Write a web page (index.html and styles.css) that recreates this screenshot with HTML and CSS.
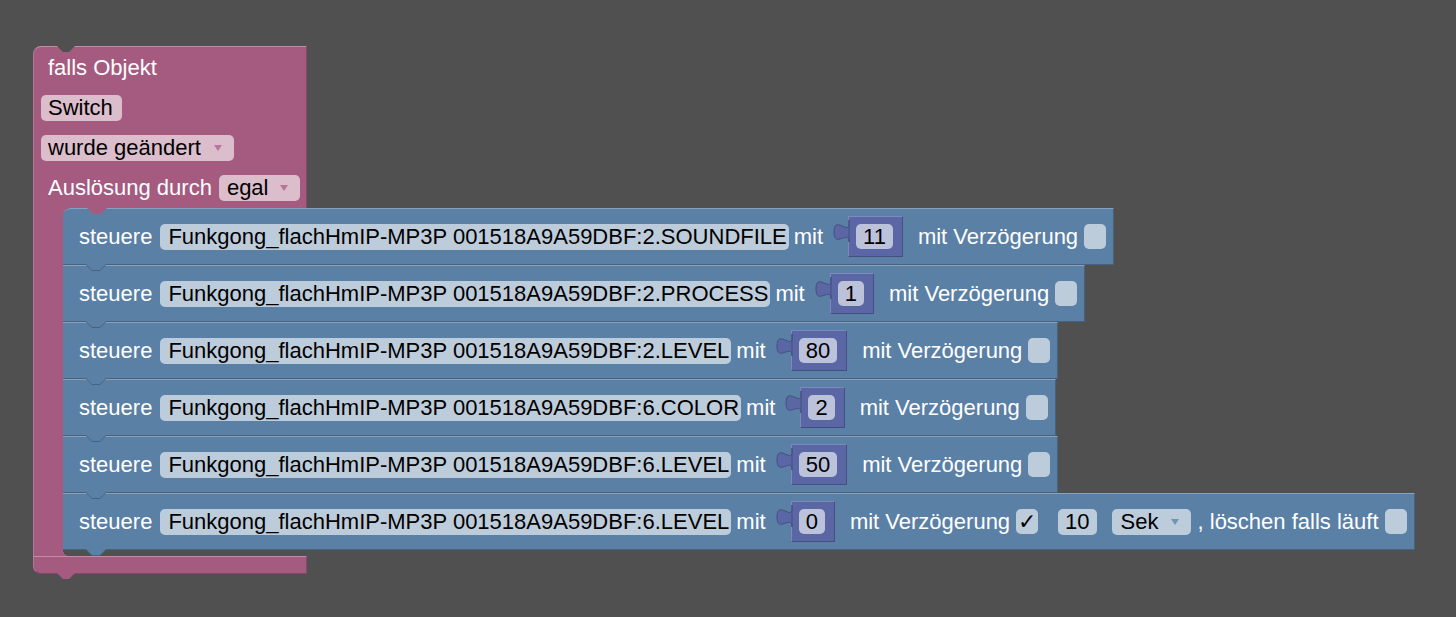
FILE: index.html
```html
<!DOCTYPE html>
<html lang="de">
<head>
<meta charset="utf-8">
<title>Blockly</title>
<link rel="stylesheet" href="styles.css">
</head>
<body>
<div class="workspace">
  <div class="event">
    <div class="ev-head">
      <div class="ev-row"><span class="lbl lbl-first">falls Objekt</span></div>
      <div class="ev-row"><span class="pfield pf-switch">Switch</span></div>
      <div class="ev-row"><span class="pfield dd">wurde geändert<i class="arrow"></i></span></div>
      <div class="ev-row"><span class="lbl lbl-first">Auslösung durch</span><span class="pfield dd pf-egal">egal<i class="arrow"></i></span></div>
    </div>
    <div class="ev-body">
      <div class="arm"></div>
      <div class="stack">
        <div class="stmt first">
          <span class="lbl">steuere</span>
          <span class="field">Funkgong_flachHmIP-MP3P 001518A9A59DBF:2.SOUNDFILE</span>
          <span class="lbl mit">mit</span>
          <span class="val"><svg class="tab" width="16" height="26" viewBox="0 0 16 26"><path d="M15 1 V5 C15 16 0 -4 0 13 S15 10 15 23 Z" /></svg><span class="vfield">11</span></span>
          <span class="lbl mv">mit Verzögerung</span>
          <span class="cb"></span>
        </div>
        <div class="stmt">
          <span class="lbl">steuere</span>
          <span class="field">Funkgong_flachHmIP-MP3P 001518A9A59DBF:2.PROCESS</span>
          <span class="lbl mit">mit</span>
          <span class="val"><svg class="tab" width="16" height="26" viewBox="0 0 16 26"><path d="M15 1 V5 C15 16 0 -4 0 13 S15 10 15 23 Z" /></svg><span class="vfield">1</span></span>
          <span class="lbl mv">mit Verzögerung</span>
          <span class="cb"></span>
        </div>
        <div class="stmt">
          <span class="lbl">steuere</span>
          <span class="field">Funkgong_flachHmIP-MP3P 001518A9A59DBF:2.LEVEL</span>
          <span class="lbl mit">mit</span>
          <span class="val"><svg class="tab" width="16" height="26" viewBox="0 0 16 26"><path d="M15 1 V5 C15 16 0 -4 0 13 S15 10 15 23 Z" /></svg><span class="vfield">80</span></span>
          <span class="lbl mv">mit Verzögerung</span>
          <span class="cb"></span>
        </div>
        <div class="stmt">
          <span class="lbl">steuere</span>
          <span class="field">Funkgong_flachHmIP-MP3P 001518A9A59DBF:6.COLOR</span>
          <span class="lbl mit">mit</span>
          <span class="val"><svg class="tab" width="16" height="26" viewBox="0 0 16 26"><path d="M15 1 V5 C15 16 0 -4 0 13 S15 10 15 23 Z" /></svg><span class="vfield">2</span></span>
          <span class="lbl mv">mit Verzögerung</span>
          <span class="cb"></span>
        </div>
        <div class="stmt">
          <span class="lbl">steuere</span>
          <span class="field">Funkgong_flachHmIP-MP3P 001518A9A59DBF:6.LEVEL</span>
          <span class="lbl mit">mit</span>
          <span class="val"><svg class="tab" width="16" height="26" viewBox="0 0 16 26"><path d="M15 1 V5 C15 16 0 -4 0 13 S15 10 15 23 Z" /></svg><span class="vfield">50</span></span>
          <span class="lbl mv">mit Verzögerung</span>
          <span class="cb"></span>
        </div>
        <div class="stmt">
          <span class="lbl">steuere</span>
          <span class="field">Funkgong_flachHmIP-MP3P 001518A9A59DBF:6.LEVEL</span>
          <span class="lbl mit">mit</span>
          <span class="val"><svg class="tab" width="16" height="26" viewBox="0 0 16 26"><path d="M15 1 V5 C15 16 0 -4 0 13 S15 10 15 23 Z" /></svg><span class="vfield">0</span></span>
          <span class="lbl mv">mit Verzögerung</span>
          <span class="cb checked">✓</span>
          <span class="field num">10</span>
          <span class="field dd sek">Sek<i class="arrow"></i></span>
          <span class="lbl comma">, löschen falls läuft</span>
          <span class="cb"></span>
        </div>
      </div>
    </div>
    <div class="ev-foot"></div>
  </div>
</div>
</body>
</html>
```

FILE: styles.css
```css
html, body {
  margin: 0;
  padding: 0;
  background: #505050;
}

body {
  font-family: "Liberation Sans", Arial, "DejaVu Sans", sans-serif;
  font-size: 22px;
}

.workspace {
  position: relative;
  width: 1456px;
  height: 617px;
  overflow: hidden;
  background: #505050;
}

/* ---------- pink event block ---------- */
.event {
  position: absolute;
  left: 33px;
  top: 46px;
  display: flex;
  flex-direction: column;
  align-items: flex-start;
}

.ev-head {
  position: relative;
  box-sizing: border-box;
  width: 274px;
  padding: 1px 7px 0 7px;
  background: #a55b80;
  border-top: 1px solid #c08ca6;
  border-left: 1px solid #b57596;
  border-right: 1px solid #84496a;
  border-top-left-radius: 8px;
}

/* top notch */
.ev-head::before {
  content: "";
  position: absolute;
  top: -1px;
  left: 23px;
  width: 18px;
  height: 6px;
  background: #505050;
  clip-path: polygon(0 0, 100% 0, 67% 100%, 33% 100%);
}

/* tab into the first statement */
.ev-head::after {
  content: "";
  position: absolute;
  bottom: -6px;
  left: 52px;
  width: 22px;
  height: 7px;
  background: #a55b80;
  clip-path: polygon(0 0, 100% 0, 68% 100%, 32% 100%);
  z-index: 2;
}

.ev-row {
  display: flex;
  align-items: center;
  height: 40px;
  color: #fff;
  white-space: nowrap;
}

.lbl {
  color: #fff;
  white-space: nowrap;
}

.lbl-first {
  margin-left: 7px;
}

.pfield {
  display: flex;
  align-items: center;
  box-sizing: border-box;
  height: 26px;
  padding: 0 8px 0 7px;
  border-radius: 5px;
  background: #dbbdcc;
  color: #000;
  white-space: nowrap;
}

.pf-switch {
  padding-right: 9px;
}

.pfield.dd {
  padding-right: 12px;
}

.pf-egal {
  margin-left: 7px;
  padding-left: 8px;
}

.arrow {
  display: inline-block;
  width: 0;
  height: 0;
  margin-left: 13px;
  border-left: 4px solid transparent;
  border-right: 4px solid transparent;
  border-top: 6px solid #b7759a;
}

.pf-egal .arrow {
  margin-left: 12px;
}

.ev-body {
  display: flex;
  align-items: stretch;
}

.arm {
  box-sizing: border-box;
  width: 30px;
  background: #a55b80;
  border-left: 1px solid #b57596;
}

.stack {
  display: flex;
  flex-direction: column;
  align-items: flex-start;
  padding-bottom: 6px;
  background:
    radial-gradient(circle at 100% 100%, transparent 8px, #a55b80 8px) 0 0 / 8px 8px no-repeat,
    radial-gradient(circle at 100% 0, transparent 6px, #a55b80 6px) 0 100% / 6px 6px no-repeat;
}

.ev-foot {
  position: relative;
  box-sizing: border-box;
  width: 274px;
  height: 18px;
  background: #a55b80;
  border-top: 1px solid #c08ca6;
  border-right: 1px solid #84496a;
  border-bottom: 1px solid #84496a;
  border-left: 1px solid #b57596;
  border-bottom-left-radius: 8px;
}

.ev-foot::after {
  content: "";
  position: absolute;
  bottom: -6px;
  left: 23px;
  width: 18px;
  height: 6px;
  background: #a55b80;
  clip-path: polygon(0 0, 100% 0, 67% 100%, 33% 100%);
}

/* ---------- blue statement blocks ---------- */
.stmt {
  position: relative;
  display: flex;
  align-items: center;
  box-sizing: border-box;
  height: 57px;
  padding: 0 7px 0 16px;
  background: #5b80a5;
  border-top: 1px solid #86a2be;
  border-bottom: 1px solid #46627f;
  border-right: 1px solid #46627f;
  white-space: nowrap;
}

.stmt.first {
  border-top-left-radius: 8px;
}

/* next-connection tab */
.stmt::before,
.stmt::after {
  content: "";
  position: absolute;
  left: 22px;
  width: 22px;
  height: 7px;
  clip-path: polygon(0 0, 100% 0, 68% 100%, 32% 100%);
  z-index: 2;
}

.stmt::before {
  bottom: -7px;
  background: #46627f;
}

.stmt::after {
  bottom: -6px;
  background: #5b80a5;
}

.field {
  display: flex;
  align-items: center;
  box-sizing: border-box;
  height: 26px;
  margin-left: 8px;
  padding: 0 2px 0 8px;
  border-radius: 5px;
  background: #bdccdb;
  color: #000;
  white-space: nowrap;
}

.mit {
  margin-left: 5px;
}

.val {
  position: relative;
  display: flex;
  align-items: center;
  box-sizing: border-box;
  height: 41px;
  margin-left: 25px;
  padding: 0 9px 0 7px;
  background: #5b67a5;
  border: 1px solid;
  border-color: #7f88bd #454e80 #454e80 #7f88bd;
}

.tab {
  position: absolute;
  left: -15px;
  top: 2px;
  overflow: visible;
}

.tab path {
  fill: #5b67a5;
  stroke: #454e80;
  stroke-width: 1;
}

.vfield {
  display: flex;
  align-items: center;
  height: 25px;
  padding: 0 7px;
  border-radius: 5px;
  background: #bdc2db;
  color: #000;
}

.mv {
  margin-left: 15px;
}

.cb {
  display: flex;
  align-items: center;
  justify-content: center;
  box-sizing: border-box;
  width: 22px;
  height: 25px;
  margin-left: 6px;
  border-radius: 5px;
  background: #bdccdb;
  color: #000;
  font-family: "DejaVu Sans", sans-serif;
  font-size: 22px;
  line-height: 1;
}

.field.num {
  margin-left: 20px;
  padding: 0 7px;
}

.field.sek {
  margin-left: 15px;
  padding: 0 12px 0 9px;
}

.field.sek .arrow {
  margin-left: 12px;
  border-top-color: #7492b1;
}

.comma {
  margin-left: 7px;
}
```
